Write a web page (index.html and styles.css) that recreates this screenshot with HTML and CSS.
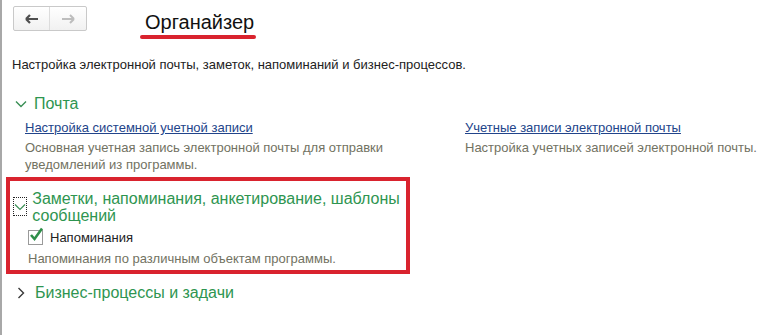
FILE: index.html
```html
<!DOCTYPE html>
<html lang="ru">
<head>
<meta charset="UTF-8">
<title>Органайзер</title>
<link rel="stylesheet" href="styles.css">
</head>
<body>

<div class="page">
  <div class="topbar">
    <div class="nav">
      <button class="navbtn back">
        <svg width="14" height="10" viewBox="0 0 14 10"><path d="M1 5h12M1 5l4-4M1 5l4 4" stroke="#4f4f4f" stroke-width="2.2" fill="none"/></svg>
      </button>
      <button class="navbtn fwd">
        <svg width="14" height="10" viewBox="0 0 14 10"><path d="M1 5h12M13 5l-4-4M13 5l-4 4" stroke="#bdbdbd" stroke-width="2" fill="none"/></svg>
      </button>
    </div>
    <div class="title">Органайзер</div>
  </div>

  <div class="intro">Настройка электронной почты, заметок, напоминаний и бизнес-процессов.</div>

  <div class="group">
    <div class="group-head">
      <svg class="chev" width="12" height="8" viewBox="0 0 12 8"><path d="M1 1.5l5 5 5-5" stroke="#3a8f55" stroke-width="1.4" fill="none"/></svg>
      <span>Почта</span>
    </div>
    <div class="cols">
      <div class="col">
        <a class="link" href="#">Настройка системной учетной записи</a>
        <div class="hint">Основная учетная запись электронной почты для отправки уведомлений из программы.</div>
      </div>
      <div class="col">
        <a class="link" href="#">Учетные записи электронной почты</a>
        <div class="hint">Настройка учетных записей электронной почты.</div>
      </div>
    </div>
  </div>

  <div class="group marked">
    <div class="group-head two">
      <span class="focus">
        <svg width="12" height="8" viewBox="0 0 12 8"><path d="M1 1.5l5 5 5-5" stroke="#3a8f55" stroke-width="1.2" fill="none"/></svg>
      </span>
      <span>Заметки, напоминания, анкетирование, шаблоны сообщений</span>
    </div>
    <label class="check">
      <span class="box">
        <svg width="16" height="16" viewBox="0 0 16 16"><path d="M3 8l3.5 4L14 1.5" stroke="#2f8f4a" stroke-width="2.6" fill="none"/></svg>
      </span>
      Напоминания
    </label>
    <div class="hint inset">Напоминания по различным объектам программы.</div>
  </div>

  <div class="group">
    <div class="group-head closed">
      <svg class="chev" width="8" height="12" viewBox="0 0 8 12"><path d="M1.5 1l5 5-5 5" stroke="#3a3a3a" stroke-width="1.4" fill="none"/></svg>
      <span>Бизнес-процессы и задачи</span>
    </div>
  </div>
</div>

</body>
</html>
```

FILE: styles.css
```css
body {
  margin: 0;
  background: #fff;
  font-family: "Liberation Sans", Arial, sans-serif;
  color: #333;
}

.page {
  border-left: 2px solid #a8a8a8;
  min-height: 335px;
  padding-left: 10px;
  box-sizing: border-box;
}

.topbar {
  display: flex;
  align-items: flex-start;
  padding-top: 6px;
  height: 34px;
}

.nav {
  display: flex;
  margin-left: 1px;
  border: 1px solid #c9c9c9;
  border-radius: 2px;
  height: 23px;
  background: linear-gradient(#ffffff, #f1f1f1);
}

.navbtn {
  width: 36px;
  height: 23px;
  border: 0;
  padding: 0;
  background: none;
  display: flex;
  align-items: center;
  justify-content: center;
}

.navbtn.back {
  border-right: 1px solid #dcdcdc;
}

.title {
  margin-left: 53px;
  margin-top: 4px;
  padding: 0 5px;
  font-size: 20px;
  line-height: 24px;
  color: #111;
}

.title::after {
  content: "";
  display: block;
  height: 4px;
  margin: 1px -2px 0 -5px;
  border-radius: 2px;
  background: #d9232e;
}

.intro {
  margin-top: 17px;
  font-size: 13px;
  line-height: 16px;
  color: #222;
}

.group-head {
  display: flex;
  align-items: center;
  font-size: 16px;
  line-height: 20px;
  color: #2e9550;
}

.group:nth-child(3) .group-head {
  margin-top: 21px;
}

.group-head .chev {
  margin: 0 7px 0 3px;
}

.cols {
  display: grid;
  grid-template-columns: 440px 1fr;
  padding-left: 13px;
  margin-top: 5px;
}

.link {
  display: block;
  font-size: 13px;
  line-height: 17px;
  color: #22448a;
  text-decoration: underline;
  text-decoration-color: #22448a;
}

.hint {
  margin-top: 3px;
  font-size: 13px;
  line-height: 17px;
  color: #727262;
  max-width: 362px;
}

.marked {
  margin: 4px 0 0 -6px;
  width: 404px;
  box-sizing: border-box;
  border: 4px solid #d9232e;
  padding: 9px 0 3px 3px;
}

.group-head.two {
  align-items: flex-start;
  line-height: 17px;
}

.focus {
  display: flex;
  align-items: center;
  justify-content: center;
  width: 15px;
  height: 17px;
  border: 1px dotted #222;
  margin: 7px 5px 0 0;
}

.check {
  display: flex;
  align-items: center;
  margin: 4px 0 0 15px;
  height: 18px;
  font-size: 13px;
  color: #222;
}

.box {
  position: relative;
  width: 13px;
  height: 13px;
  border: 1px solid #9a9a9a;
  background: #fff;
  margin-right: 7px;
}

.box svg {
  position: absolute;
  left: -1px;
  top: -4px;
}

.hint.inset {
  margin: 4px 0 0 15px;
  max-width: none;
}

.group-head.closed {
  margin-top: 9px;
}

.group-head.closed .chev {
  margin: 0 10px 0 5px;
}
```
